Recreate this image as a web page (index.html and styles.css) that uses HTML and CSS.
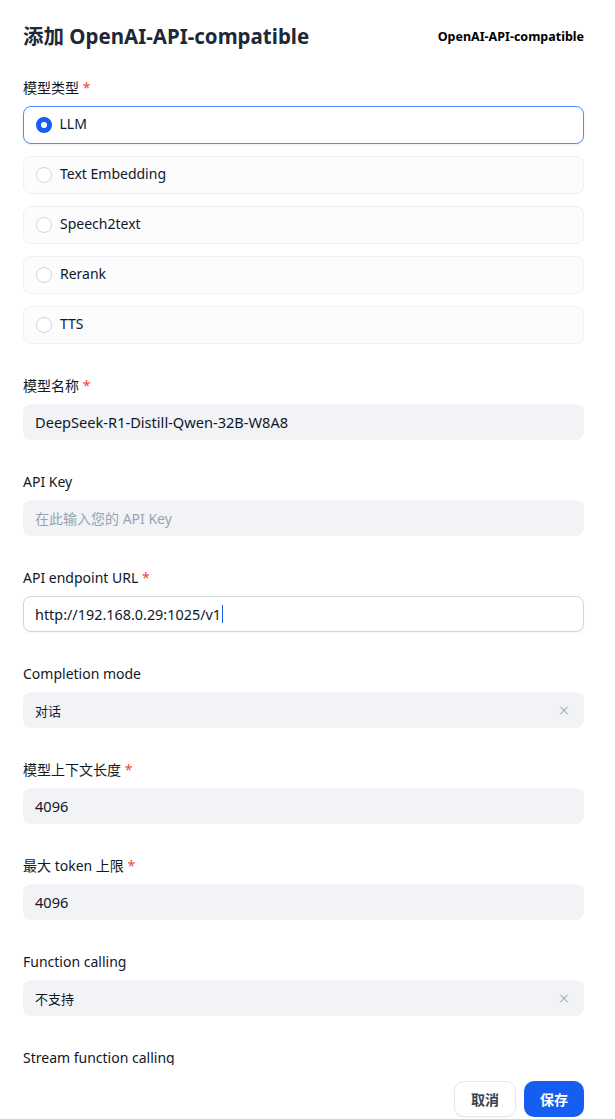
FILE: index.html
```html
<!DOCTYPE html>
<html lang="zh-CN">
<head>
<meta charset="utf-8">
<title>添加 OpenAI-API-compatible</title>
<link rel="stylesheet" href="styles.css">
</head>
<body>
<div class="modal">
  <div class="scroll">
    <div class="header">
      <h1 class="title">添加 OpenAI-API-compatible</h1>
      <span class="provider">OpenAI-API-compatible</span>
    </div>
    <div class="form">
      <div class="field">
        <div class="label">模型类型 <span class="req">*</span></div>
        <div class="radios">
          <div class="radio-card selected"><span class="radio on"></span><span>LLM</span></div>
          <div class="radio-card"><span class="radio"></span><span>Text Embedding</span></div>
          <div class="radio-card"><span class="radio"></span><span>Speech2text</span></div>
          <div class="radio-card"><span class="radio"></span><span>Rerank</span></div>
          <div class="radio-card"><span class="radio"></span><span>TTS</span></div>
        </div>
      </div>
      <div class="field">
        <div class="label">模型名称 <span class="req">*</span></div>
        <div class="input">DeepSeek-R1-Distill-Qwen-32B-W8A8</div>
      </div>
      <div class="field">
        <div class="label">API Key</div>
        <div class="input placeholder">在此输入您的 API Key</div>
      </div>
      <div class="field">
        <div class="label">API endpoint URL <span class="req">*</span></div>
        <div class="input focused">http://192.168.0.29:1025/v1<span class="caret"></span></div>
      </div>
      <div class="field">
        <div class="label">Completion mode</div>
        <div class="input select"><span class="small">对话</span><span class="clear">×</span></div>
      </div>
      <div class="field">
        <div class="label">模型上下文长度 <span class="req">*</span></div>
        <div class="input">4096</div>
      </div>
      <div class="field">
        <div class="label">最大 token 上限 <span class="req">*</span></div>
        <div class="input">4096</div>
      </div>
      <div class="field">
        <div class="label">Function calling</div>
        <div class="input select"><span class="small">不支持</span><span class="clear">×</span></div>
      </div>
      <div class="field">
        <div class="label">Stream function calling</div>
      </div>
    </div>
  </div>
  <div class="footer">
    <button class="btn cancel">取消</button>
    <button class="btn save">保存</button>
  </div>
</div>
</body>
</html>
```

FILE: styles.css
```css
* { box-sizing: border-box; }
html, body { margin: 0; padding: 0; background: #fff; }
body {
  font-family: "Noto Sans", "Noto Sans CJK SC", sans-serif;
  color: #101828;
  font-size: 14px;
}
.modal { width: 615px; height: 1119px; display: flex; flex-direction: column; }
.scroll { height: 1065px; overflow: hidden; padding: 22px 31px 0 23px; flex: none; }
.header { display: flex; justify-content: space-between; align-items: center; height: 28px; }
.title { margin: 0; font-size: 20.5px; line-height: 28px; font-weight: 700; color: #1d2939; }
.provider { font-size: 12.5px; font-weight: 700; color: #000; }
.form { display: flex; flex-direction: column; gap: 32px; margin-top: 28px; }
.field { display: flex; flex-direction: column; gap: 8px; }
.label { font-size: 14px; line-height: 20px; color: #101828; }
.req { color: #f04438; }
.radios { display: flex; flex-direction: column; gap: 12px; }
.radio-card {
  height: 38px; display: flex; align-items: center; gap: 8px;
  padding-left: 12px; border: 1px solid #f0f1f3; border-radius: 8px;
  background: #fcfcfd; font-size: 14px; line-height: 20px;
}
.radio-card span:last-child { margin-top: -2px; }
.radio-card.selected {
  background: #fff; border: 1.5px solid #528bff; padding-left: 11.5px;
  box-shadow: 0 1px 2px rgba(16,24,40,0.08);
}
.radio { width: 16px; height: 16px; border-radius: 50%; border: 1px solid #d0d5dd; background: #fff; flex: none; }
.radio.on { border: 5px solid #155eef; background: #fff; }
.input {
  height: 36px; display: flex; align-items: center; padding: 0 12px;
  background: #f2f3f6; border-radius: 8px; font-size: 14.6px; color: #101828;
}
.input.placeholder { color: #98a2b3; font-size: 14px; }
.input.focused { background: #fff; border: 1px solid #d0d5dd; padding-left: 11px; box-shadow: 0 1px 2px rgba(16,24,40,0.05); font-size: 14.4px; }
.caret { display: inline-block; width: 1px; height: 18px; background: #155eef; margin-left: 1px; }
.select { justify-content: space-between; }
.small { font-size: 13px; }
.clear { color: #a0a6b1; font-size: 18px; font-weight: 300; margin-right: 3px; }
.footer { display: flex; justify-content: flex-end; gap: 8px; padding: 16px 31px 0 0; }
.btn {
  height: 36px; border-radius: 10px; font-family: inherit; font-size: 14px; font-weight: 700;
  padding: 0; cursor: pointer;
}
.cancel { width: 62px; background: #fff; border: 1px solid #e4e7ec; color: #344054; box-shadow: 0 1px 2px rgba(16,24,40,0.05); }
.save { width: 60px; background: #155eef; border: none; color: #fff; }
```
